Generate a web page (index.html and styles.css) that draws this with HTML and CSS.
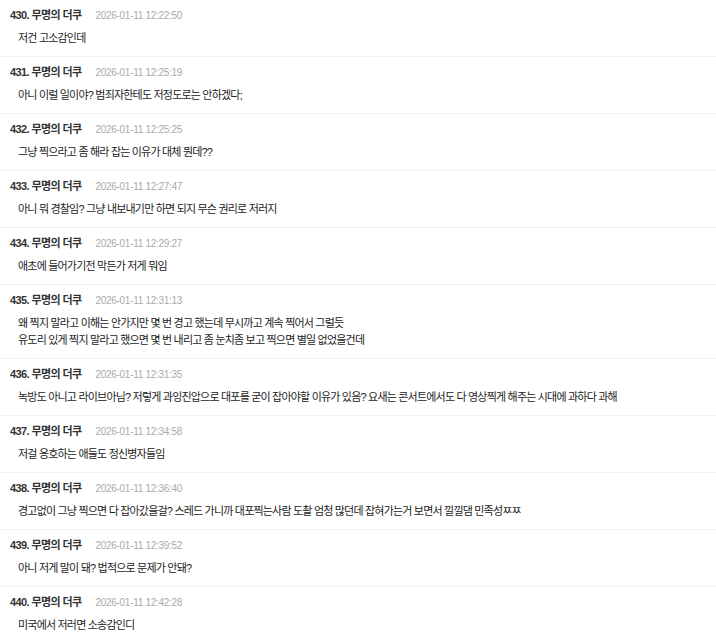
FILE: index.html
```html
<!DOCTYPE html>
<html lang="ko">
<head>
    <meta charset="utf-8">
    <title>댓글</title>
    <link rel="stylesheet" href="styles.css">
</head>
<body>
    <div class="comments">
        <div class="comment">
            <div class="comment-head"><span class="comment-name">430. 무명의 더쿠</span><span class="comment-date">2026-01-11 12:22:50</span></div>
            <div class="comment-body">저건 고소감인데</div>
        </div>
        <div class="comment">
            <div class="comment-head"><span class="comment-name">431. 무명의 더쿠</span><span class="comment-date">2026-01-11 12:25:19</span></div>
            <div class="comment-body">아니 이럴 일이야? 범죄자한테도 저정도로는 안하겠다;</div>
        </div>
        <div class="comment">
            <div class="comment-head"><span class="comment-name">432. 무명의 더쿠</span><span class="comment-date">2026-01-11 12:25:25</span></div>
            <div class="comment-body">그냥 찍으라고 좀 해라 잡는 이유가 대체 뭔데??</div>
        </div>
        <div class="comment">
            <div class="comment-head"><span class="comment-name">433. 무명의 더쿠</span><span class="comment-date">2026-01-11 12:27:47</span></div>
            <div class="comment-body">아니 뭐 경찰임? 그냥 내보내기만 하면 되지 무슨 권리로 저러지</div>
        </div>
        <div class="comment">
            <div class="comment-head"><span class="comment-name">434. 무명의 더쿠</span><span class="comment-date">2026-01-11 12:29:27</span></div>
            <div class="comment-body">애초에 들어가기전 막든가 저게 뭐임</div>
        </div>
        <div class="comment">
            <div class="comment-head"><span class="comment-name">435. 무명의 더쿠</span><span class="comment-date">2026-01-11 12:31:13</span></div>
            <div class="comment-body">왜 찍지 말라고 이해는 안가지만 몇 번 경고 했는데 무시까고 계속 찍어서 그럴듯<br>유도리 있게 찍지 말라고 했으면 몇 번 내리고 좀 눈치좀 보고 찍으면 별일 없었을건데</div>
        </div>
        <div class="comment">
            <div class="comment-head"><span class="comment-name">436. 무명의 더쿠</span><span class="comment-date">2026-01-11 12:31:35</span></div>
            <div class="comment-body">녹방도 아니고 라이브아님? 저렇게 과잉진압으로 대포를 굳이 잡아야할 이유가 있음? 요새는 콘서트에서도 다 영상찍게 해주는 시대에 과하다 과해</div>
        </div>
        <div class="comment">
            <div class="comment-head"><span class="comment-name">437. 무명의 더쿠</span><span class="comment-date">2026-01-11 12:34:58</span></div>
            <div class="comment-body">저걸 옹호하는 애들도 정신병자들임</div>
        </div>
        <div class="comment">
            <div class="comment-head"><span class="comment-name">438. 무명의 더쿠</span><span class="comment-date">2026-01-11 12:36:40</span></div>
            <div class="comment-body">경고없이 그냥 찍으면 다 잡아갔을걸? 스레드 가니까 대포찍는사람 도촬 엄청 많던데 잡혀가는거 보면서 낄낄댐 민족성ㅉㅉ</div>
        </div>
        <div class="comment">
            <div class="comment-head"><span class="comment-name">439. 무명의 더쿠</span><span class="comment-date">2026-01-11 12:39:52</span></div>
            <div class="comment-body">아니 저게 말이 돼? 법적으로 문제가 안돼?</div>
        </div>
        <div class="comment">
            <div class="comment-head"><span class="comment-name">440. 무명의 더쿠</span><span class="comment-date">2026-01-11 12:42:28</span></div>
            <div class="comment-body">미국에서 저러면 소송감인디</div>
        </div>
    </div>
</body>
</html>
```

FILE: styles.css
```css
body {
    margin: 0;
    background-color: #fff;
    font-family: "Liberation Sans", "Noto Sans CJK KR", sans-serif;
    color: #333;
}

.comment {
    padding: 7px 10px 9px;
    border-bottom: 1px solid #f0f0f0;
}

.comment-head {
    display: flex;
    align-items: baseline;
    gap: 14px;
    height: 16px;
    line-height: 16px;
    margin-bottom: 7px;
}

.comment-name {
    font-size: 11px;
    font-weight: bold;
    letter-spacing: -0.6px;
    color: #333;
}

.comment-date {
    font-size: 10px;
    letter-spacing: -0.3px;
    color: #aaa;
}

.comment-body {
    padding-left: 8px;
    font-size: 11px;
    line-height: 17px;
    letter-spacing: -0.8px;
    color: #222;
}
```
